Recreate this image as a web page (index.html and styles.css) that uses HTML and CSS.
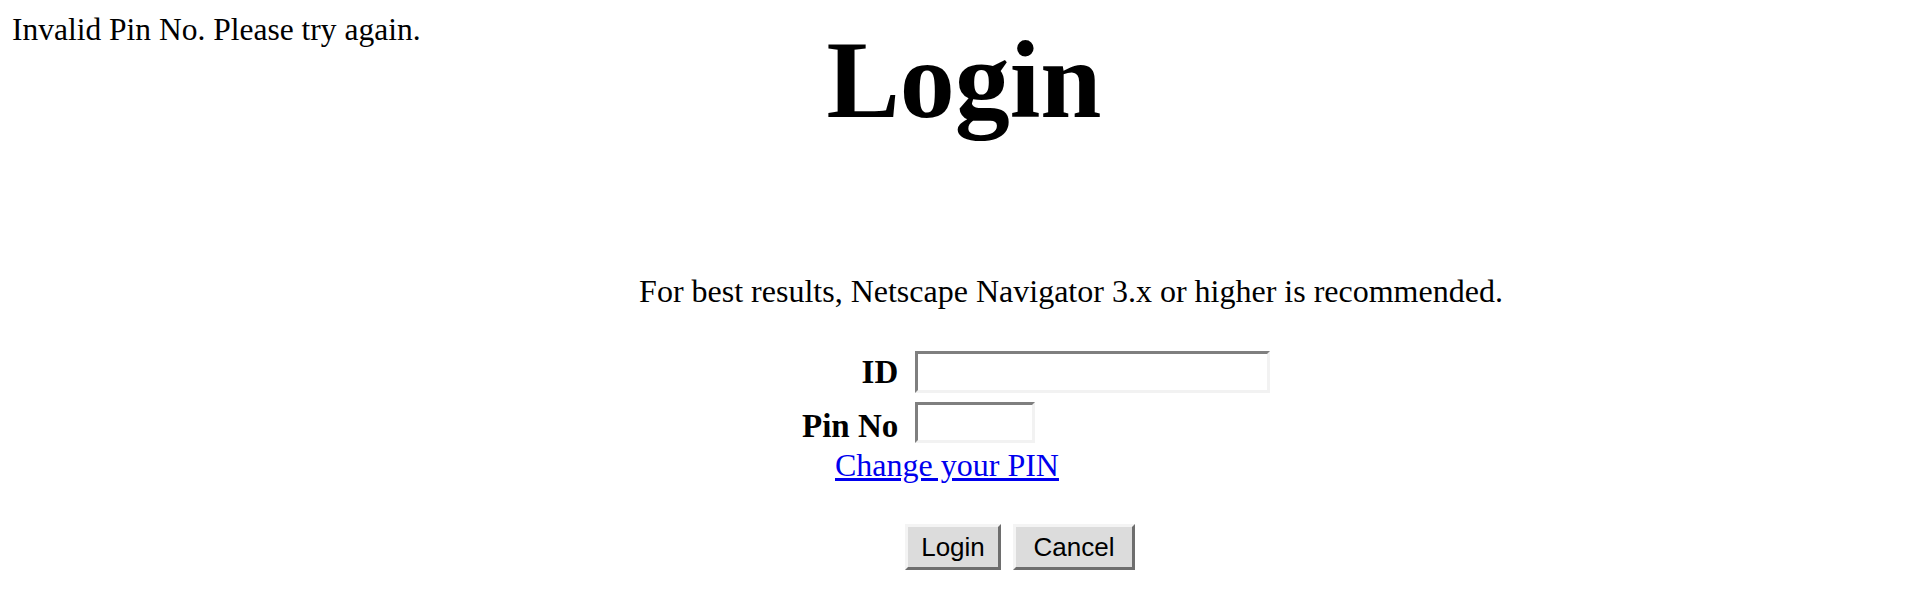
FILE: index.html
```html
<!DOCTYPE html>
<html>
<head>
<meta charset="utf-8">
<title>Login</title>
<link rel="stylesheet" href="styles.css">
</head>
<body>
<header class="top">
  <div class="error">Invalid Pin No. Please try again.</div>
  <h1 class="title">Login</h1>
  <div></div>
</header>
<main class="content">
  <p class="note">For best results, Netscape Navigator 3.x or higher is recommended.</p>
  <form class="login-form">
    <div class="fields">
      <label class="lbl lbl-id" for="id">ID</label>
      <input class="field field-id" id="id" type="text">
      <label class="lbl lbl-pin" for="pin">Pin No</label>
      <input class="field field-pin" id="pin" type="password">
    </div>
    <a class="change-link" href="#">Change your PIN</a>
    <div class="buttons">
      <button class="btn btn-login" type="button">Login</button>
      <button class="btn btn-cancel" type="button">Cancel</button>
    </div>
  </form>
</main>
</body>
</html>
```
FILE: styles.css
```css
html, body {
  margin: 0;
  padding: 0;
  background: #ffffff;
}
body {
  font-family: "Liberation Serif", "Times New Roman", serif;
  font-size: 32px;
  color: #000000;
  width: 1928px;
  height: 596px;
  overflow: hidden;
}
.top {
  display: grid;
  grid-template-columns: 1fr auto 1fr;
  align-items: start;
}
.error {
  padding: 12px 0 0 12px;
  font-size: 31.5px;
  line-height: normal;
}
.title {
  margin: 17px 0 0 0;
  font-size: 110px;
  font-weight: bold;
  line-height: normal;
}
.content {
  display: flex;
  flex-direction: column;
  align-items: center;
  margin-left: 214px;
  padding-top: 129px;
}
.note {
  margin: 0;
  line-height: normal;
}
.login-form {
  align-self: flex-start;
  margin: 41px 0 0 588px;
  display: flex;
  flex-direction: column;
}
.fields {
  display: grid;
  grid-template-columns: auto auto;
  column-gap: 17px;
  row-gap: 9px;
  align-items: center;
  justify-content: start;
}
.lbl {
  font-size: 33px;
  font-weight: bold;
  text-align: right;
  line-height: 1;
}
.lbl-pin {
  padding-top: 8px;
}
.field {
  box-sizing: border-box;
  height: 42px;
  margin: 0;
  padding: 0 6px;
  background: #ffffff;
  border-style: solid;
  border-width: 3px;
  border-color: #7f7f7f #f2f2f2 #f2f2f2 #7f7f7f;
  outline: none;
  font-family: "Liberation Mono", monospace;
  font-size: 22px;
}
.field-id {
  width: 355px;
}
.field-pin {
  width: 120px;
  height: 41px;
}
.change-link {
  align-self: flex-start;
  margin: 4px 0 0 33px;
  color: #0000ee;
  text-decoration: underline;
  line-height: normal;
}
.buttons {
  display: flex;
  gap: 12px;
  margin: 40px 0 0 103px;
}
.btn {
  box-sizing: border-box;
  height: 46px;
  margin: 0;
  padding: 0;
  background: #dcdcdc;
  border-style: solid;
  border-width: 3px;
  border-color: #f4f4f4 #6e6e6e #6e6e6e #f4f4f4;
  font-family: "Liberation Sans", Arial, sans-serif;
  font-size: 26px;
  color: #000000;
}
.btn-login {
  width: 96px;
}
.btn-cancel {
  width: 122px;
}
```
